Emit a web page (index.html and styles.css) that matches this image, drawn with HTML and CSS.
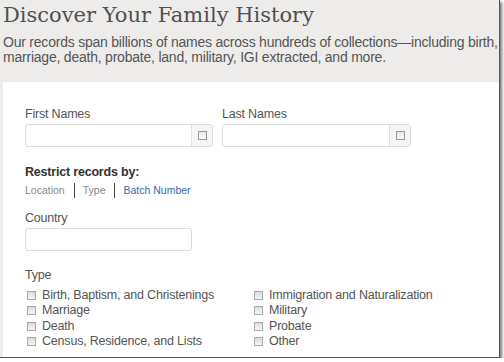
FILE: index.html
```html
<!DOCTYPE html>
<html lang="en">
<head>
    <meta charset="UTF-8">
    <title>Discover Your Family History</title>
    <link rel="stylesheet" href="styles.css">
</head>
<body>
    <div id="shot">
        <div class="intro">
            <h1>Discover Your Family History</h1>
            <p>Our records span billions of names across hundreds of collections—including birth, marriage, death, probate, land, military, IGI extracted, and more.</p>
        </div>
        <div class="panel">
            <div class="names">
                <div class="field">
                    <label>First Names</label>
                    <div class="input"><span class="addon"><i></i></span></div>
                </div>
                <div class="field">
                    <label>Last Names</label>
                    <div class="input"><span class="addon"><i></i></span></div>
                </div>
            </div>
            <h4>Restrict records by:</h4>
            <ul class="tabs">
                <li>Location</li>
                <li>Type</li>
                <li class="on">Batch Number</li>
            </ul>
            <label>Country</label>
            <div class="input short"></div>
            <label class="type">Type</label>
            <ul class="checks">
                <li><span class="box"></span>Birth, Baptism, and Christenings</li>
                <li><span class="box"></span>Immigration and Naturalization</li>
                <li><span class="box"></span>Marriage</li>
                <li><span class="box"></span>Military</li>
                <li><span class="box"></span>Death</li>
                <li><span class="box"></span>Probate</li>
                <li><span class="box"></span>Census, Residence, and Lists</li>
                <li><span class="box"></span>Other</li>
            </ul>
        </div>
    </div>
</body>
</html>
```

FILE: styles.css
```css
body,p,h1,h4,ul{
    margin:0;
}
ul{
    padding-left:0;
    list-style-type:none;
}
body{
    background:#fff;
    font-family:"Liberation Sans",Arial,sans-serif;
    color:#555;
}
/* 截图外框 */
#shot{
    width:500px;
    height:358px;
    box-sizing:border-box;
    border-right:1px solid #555;
    border-bottom:1px solid #555;
    box-shadow:2px 2px 3px rgba(0,0,0,.55);
    background:#edecea;
    overflow:hidden;
}
.intro{
    height:82px;
    padding-left:3px;
}
.intro h1{
    font-family:"DejaVu Serif",serif;
    font-weight:normal;
    font-size:21px;
    line-height:30px;
    color:#505050;
}
.intro p{
    margin-top:5px;
    font-size:14px;
    letter-spacing:-0.22px;
    line-height:15px;
    color:#555;
}
.panel{
    margin-left:3px;
    height:275px;
    background:#fff;
    padding:24px 0 0 22px;
    box-sizing:border-box;
    font-size:12.5px;
    letter-spacing:-0.2px;
}
label{
    display:block;
    line-height:16px;
    color:#555;
    margin-bottom:2px;
}
.names{
    display:flex;
    gap:9px;
}
.field{
    width:188px;
}
.field:last-child{
    width:189px;
}
.input{
    position:relative;
    height:23px;
    box-sizing:border-box;
    border:1px solid #dcdcdc;
    border-radius:3px;
    background:#fff;
}
.input.short{
    width:167px;
    margin-top:1px;
    margin-bottom:16px;
}
.addon{
    position:absolute;
    right:0;
    top:0;
    bottom:0;
    width:20px;
    border-left:1px solid #e2e2e2;
    background:#f5f5f5;
    display:flex;
    align-items:center;
    justify-content:center;
}
.addon i{
    width:7px;
    height:7px;
    border:1px solid #999;
    background:linear-gradient(#e8e8e8,#fafafa);
}
.panel h4{
    margin-top:17px;
    font-size:12.5px;
    line-height:16px;
    color:#333;
}
.tabs{
    display:flex;
    margin:3px 0 12px;
    font-size:10.5px;
    letter-spacing:0;
    line-height:15px;
    color:#888;
}
.tabs li{
    padding:0 9px 0 8px;
}
.tabs li:first-child{
    padding-left:0;
}
.tabs li+li{
    border-left:1.5px solid #444;
}
.tabs li.on{
    color:#3869b1;
}
.checks{
    display:grid;
    grid-template-columns:227px auto;
    margin-top:5px;
    font-size:12.5px;
    line-height:15.3px;
}
.checks li{
    display:flex;
    align-items:center;
}
.box{
    width:7px;
    height:7px;
    margin:0 6px 0 2px;
    border:1px solid #aaa;
    background:linear-gradient(#dcdcdc,#f6f6f6);
}
```
